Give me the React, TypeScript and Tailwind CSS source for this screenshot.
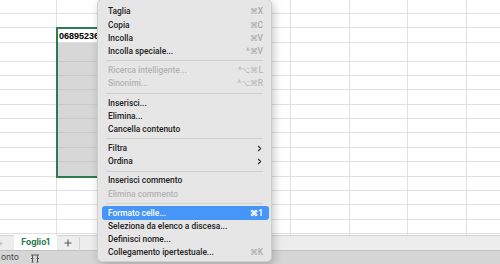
import { ChevronRight } from "lucide-react";

type Item = {
  label: string;
  shortcut?: string;
  disabled?: boolean;
  active?: boolean;
  submenu?: boolean;
};

const groups: Item[][] = [
  [
    { label: "Taglia", shortcut: "⌘X" },
    { label: "Copia", shortcut: "⌘C" },
    { label: "Incolla", shortcut: "⌘V" },
    { label: "Incolla speciale...", shortcut: "^⌘V" },
  ],
  [
    { label: "Ricerca intelligente...", shortcut: "^⌥⌘L", disabled: true },
    { label: "Sinonimi...", shortcut: "^⌥⌘R", disabled: true },
  ],
  [
    { label: "Inserisci..." },
    { label: "Elimina..." },
    { label: "Cancella contenuto" },
  ],
  [
    { label: "Filtra", submenu: true },
    { label: "Ordina", submenu: true },
  ],
  [
    { label: "Inserisci commento" },
    { label: "Elimina commento", disabled: true },
  ],
  [
    { label: "Formato celle...", shortcut: "⌘1", active: true },
    { label: "Seleziona da elenco a discesa..." },
    { label: "Definisci nome..." },
    { label: "Collegamento ipertestuale...", shortcut: "⌘K" },
  ],
];

const rowHeights = [
  "h-[14px]", "h-[14px]", "h-[15px]", "h-[18.5px]",
  "h-[14.4px]", "h-[14.4px]", "h-[14.4px]", "h-[14.4px]",
  "h-[14.4px]", "h-[14.4px]", "h-[14.4px]", "h-[14.4px]",
  "h-[14.4px]", "h-[14.4px]", "h-[14.4px]", "h-[14.4px]", "h-[14.4px]",
];

const colWidths = [
  "w-[57px]", "w-[58.5px]", "w-[58.5px]", "w-[58.5px]", "w-[58.5px]",
  "w-[58.5px]", "w-[58.5px]", "w-[58.5px]", "w-[58.5px]",
];

function MenuRow({ item }: { item: Item }) {
  if (item.active) {
    return (
      <div className="h-[13.2px] ml-[3.5px] mr-[2px] pl-[6.5px] pr-[6px] flex items-center justify-between rounded-[3px] bg-[#4596f7] text-white">
        <span>{item.label}</span>
        <span className="font-semibold">{item.shortcut}</span>
      </div>
    );
  }
  return (
    <div
      className={
        "h-[13.2px] pl-[10px] pr-[8px] flex items-center justify-between " +
        (item.disabled ? "text-[#b3b3b3]" : "text-[#222]")
      }
    >
      <span>{item.label}</span>
      {item.shortcut && (
        <span className={item.disabled ? "text-[#b9b9b9]" : "text-[#a8a8a8]"}>{item.shortcut}</span>
      )}
      {item.submenu && <ChevronRight size={9} strokeWidth={3} className="text-[#333] -mr-[1px]" />}
    </div>
  );
}

function ContextMenu() {
  return (
    <div className="absolute left-[97px] top-[-1px] w-[175px] h-[263px] pt-[5px] rounded-[5px] bg-[#e7e6e6] border border-[#cfcfcf] shadow-[2px_3px_10px_rgba(0,0,0,0.22)] font-['Roboto','Liberation_Sans',sans-serif] text-[8.4px] font-medium leading-none">
      {groups.map((g, i) => (
        <div key={i}>
          {i > 0 && (
            <div className="h-[6px] flex items-center px-[8px]">
              <div className="h-px w-full bg-[#d0d0d0]" />
            </div>
          )}
          {g.map((it) => (
            <MenuRow key={it.label} item={it} />
          ))}
        </div>
      ))}
    </div>
  );
}

function Sheet() {
  return (
    <div className="relative h-[238px] overflow-hidden bg-white">
      <div className="flex flex-col">
        {rowHeights.map((h, r) => (
          <div key={r} className={"flex shrink-0 " + h}>
            {colWidths.map((w, c) => {
              const selected = c === 1 && r >= 3 && r <= 11;
              return (
                <div
                  key={c}
                  className={
                    "shrink-0 border-r border-b border-[#e0e0e0] " +
                    w +
                    (selected ? " bg-[#d7d7d7] border-b-[#cacaca]" : "")
                  }
                >
                  {c === 1 && r === 2 && (
                    <span className="block pl-[2px] pt-[2px] font-['Liberation_Sans',sans-serif] text-[9px] font-bold text-black leading-[12px] whitespace-nowrap">
                      06895236
                    </span>
                  )}
                </div>
              );
            })}
          </div>
        ))}
      </div>
      {/* selection outline */}
      <div className="absolute left-[56px] top-[27px] w-[60.5px] h-[151px] border-2 border-[#2e7a51]" />
    </div>
  );
}

function TabBar() {
  return (
    <div className="h-[15px] flex items-stretch bg-[#ededed] border-t border-[#d2d2d2]">
      <div className="w-[14px] flex items-center">
        <svg width="5" height="7" viewBox="0 0 5 7" className="-ml-[2px]">
          <path d="M0 0 L5 3.5 L0 7 Z" fill="#c4c4c4" />
        </svg>
      </div>
      <div className="w-[43px] -mt-px bg-white flex items-center justify-center text-[8.5px] font-bold text-[#2a7a4f]">
        Foglio1
      </div>
      <div className="w-[23px] flex items-center justify-center border-r border-[#d4d4d4] my-[1px]">
        <svg width="8" height="8" viewBox="0 0 8 8">
          <path d="M4 0.5 V7.5 M0.5 4 H7.5" stroke="#555" strokeWidth="1.1" />
        </svg>
      </div>
      <div className="flex-1" />
    </div>
  );
}

function StatusBar() {
  return (
    <div className="flex-1 flex items-center bg-[#d6d6d6] border-t border-[#c2c2c2] text-[8.5px] text-[#4a4a4a]">
      <span className="pl-px">onto</span>
      <svg width="10" height="9" viewBox="0 0 10 9" className="ml-[11px] mt-[2px]">
        <path d="M1 1 H9 M2.5 1 V8 M7.5 1 V8 M1 4.5 H3.5 M6.5 4.5 H9 M1.5 8 H3.5 M6.5 8 H8.5" stroke="#555" strokeWidth="1" fill="none" />
      </svg>
    </div>
  );
}

export default function App() {
  return (
    <div className="relative w-[500px] h-[264px] overflow-hidden bg-white font-['Inter','Liberation_Sans',sans-serif]">
      <div className="flex flex-col h-full">
        <Sheet />
        <TabBar />
        <StatusBar />
      </div>
      <ContextMenu />
    </div>
  );
}
